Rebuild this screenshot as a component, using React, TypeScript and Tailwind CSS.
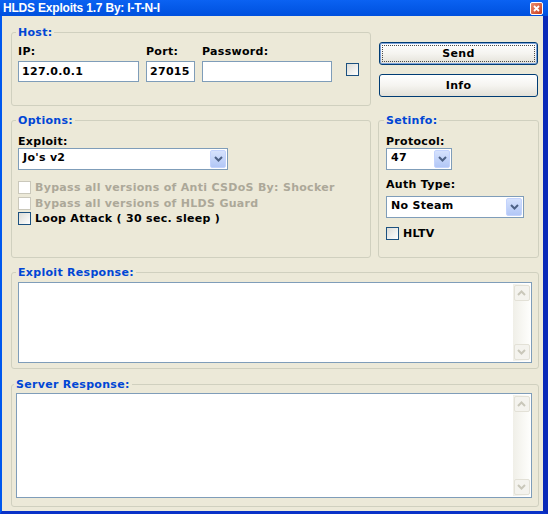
import React from 'react';

function GroupBox({ title, className = '', children }: { title: string; className?: string; children?: React.ReactNode }) {
  return (
    <fieldset className={`rounded-[3px] border border-[#D0D0BF] ${className}`}>
      <legend className="-ml-[2px] px-[2px] leading-[13px] text-[#0046D5]">{title}</legend>
      {children}
    </fieldset>
  );
}

function TextBox({ value = '', className = '' }: { value?: string; className?: string }) {
  return (
    <div className={`flex h-[21px] items-center border border-[#7F9DB9] bg-white pl-[3px] text-black ${className}`}>
      {value}
    </div>
  );
}

function Chevron({ color, up = false }: { color: string; up?: boolean }) {
  return (
    <svg width="9" height="6" viewBox="0 0 9 6">
      <path d={up ? 'M1 5l3.5-3.5L8 5' : 'M1 1l3.5 3.5L8 1'} stroke={color} strokeWidth="2" fill="none" />
    </svg>
  );
}

function Select({ value, className = '' }: { value: string; className?: string }) {
  return (
    <div className={`flex h-[22px] border border-[#7F9DB9] bg-white p-[1px] ${className}`}>
      <span className="flex-1 pl-[3px] pt-[1px] leading-[14px] text-black">{value}</span>
      <span className="flex w-[16px] items-center justify-center rounded-[2px] border border-[#C3D3FD] bg-linear-to-b from-[#D6E2FD] to-[#B2C7F6]">
        <Chevron color="#4D6185" />
      </span>
    </div>
  );
}

function CheckBox({ label, disabled = false, className = '' }: { label?: string; disabled?: boolean; className?: string }) {
  return (
    <div className={`flex items-center ${className}`}>
      <span
        className={`h-[13px] w-[13px] shrink-0 border ${
          disabled ? 'border-[#CAC8BB] bg-white' : 'border-[#1C5180] bg-linear-to-br from-[#DCDCD7] to-white'
        }`}
      />
      {label && <span className={`ml-[4px] ${disabled ? 'text-[#ACA899]' : 'text-black'}`}>{label}</span>}
    </div>
  );
}

function Button({ children, focused = false }: { children: React.ReactNode; focused?: boolean }) {
  return (
    <div
      className={`relative flex h-[23px] items-center justify-center rounded-[3px] border border-[#003C74] bg-linear-to-b from-white via-[#F5F4F0] to-[#E3E1D8] pt-[1px] text-black ${
        focused ? 'shadow-[inset_0_0_0_1px_#7FA3D9]' : ''
      }`}
    >
      {focused && <div className="absolute inset-[2px] border border-dotted border-[#4b4b4b]" />}
      {children}
    </div>
  );
}

function ScrollButton({ up = false }: { up?: boolean }) {
  return (
    <div className="flex h-[16px] w-[16px] items-center justify-center rounded-[2px] border border-[#E3E1D7] bg-[#F4F3EE]">
      <Chevron color="#C9C7BA" up={up} />
    </div>
  );
}

function Memo({ className = '' }: { className?: string }) {
  return (
    <div className={`flex justify-end border border-[#7F9DB9] bg-white p-[1px] ${className}`}>
      <div className="flex w-[17px] flex-col items-center justify-between bg-linear-to-r from-[#F0EFE8] to-[#FEFEFC] py-[1px]">
        <ScrollButton up />
        <ScrollButton />
      </div>
    </div>
  );
}

function TitleBar() {
  return (
    <div className="flex h-[16px] items-center justify-between bg-linear-to-b from-[#0B62F2] to-[#0050DE] pl-[3px] pr-[5px]">
      <span className="font-['Liberation_Sans',Arial,sans-serif] text-[12px] tracking-[-0.2px] text-white">
        HLDS Exploits 1.7 By: I-T-N-I
      </span>
      <div className="flex h-[13px] w-[13px] items-center justify-center rounded-[2px] border border-white bg-linear-to-br from-[#E98B6B] to-[#C9381A]">
        <svg width="7" height="7" viewBox="0 0 7 7">
          <path d="M1 1l5 5M6 1L1 6" stroke="white" strokeWidth="1.8" />
        </svg>
      </div>
    </div>
  );
}

export default function App() {
  return (
    <div className="h-[514px] w-[548px] overflow-hidden bg-[#0831D9] font-['DejaVu_Sans',Verdana,sans-serif] text-[11px] font-bold tracking-[0.3px]">
      <TitleBar />
      <div className="border-b-[3px] border-l-[2px] border-r-[5px] border-b-[#0A32C8] border-l-[#0058EE] border-r-[#0A2AB8]">
        <div className="flex h-[495px] flex-col bg-[#ECE9D8] pl-[9px] pr-[4px] pt-[10px]">
          <div className="flex">
            <GroupBox title="Host:" className="h-[80px] w-[360px] px-[6px] pt-[6px]">
              <div className="flex items-end leading-[13px] text-black">
                <div className="flex flex-col">
                  <span>IP:</span>
                  <TextBox value="127.0.0.1" className="mt-[3px] w-[121px]" />
                </div>
                <div className="ml-[7px] flex flex-col">
                  <span>Port:</span>
                  <TextBox value="27015" className="mt-[3px] w-[49px]" />
                </div>
                <div className="ml-[7px] flex flex-col">
                  <span>Password:</span>
                  <TextBox className="mt-[3px] w-[130px]" />
                </div>
                <CheckBox className="mb-[6px] ml-[14px]" />
              </div>
            </GroupBox>
            <div className="ml-[8px] flex w-[159px] flex-col gap-[9px] pt-[16px]">
              <Button focused>Send</Button>
              <Button>Info</Button>
            </div>
          </div>

          <div className="mt-[8px] flex">
            <GroupBox title="Options:" className="h-[144px] w-[360px] px-[6px] pt-[8px]">
              <div className="flex flex-col leading-[13px]">
                <span className="text-black">Exploit:</span>
                <Select value="Jo's v2" className="w-[210px]" />
                <CheckBox disabled label="Bypass all versions of Anti CSDoS By: Shocker" className="mt-[10px] h-[15px]" />
                <CheckBox disabled label="Bypass all versions of HLDS Guard" className="h-[17px]" />
                <CheckBox label="Loop Attack ( 30 sec. sleep )" className="h-[13px]" />
              </div>
            </GroupBox>
            <GroupBox title="Setinfo:" className="ml-[7px] h-[144px] w-[161px] px-[7px] pt-[8px]">
              <div className="flex flex-col leading-[13px]">
                <span className="text-black">Protocol:</span>
                <Select value="47" className="w-[66px]" />
                <span className="mt-[8px] text-black">Auth Type:</span>
                <Select value="No Steam" className="mt-[5px] w-[138px]" />
                <CheckBox label="HLTV" className="mt-[9px]" />
              </div>
            </GroupBox>
          </div>

          <GroupBox title="Exploit Response:" className="mt-[8px] h-[103px] w-[528px] px-[6px] pt-[3px]">
            <Memo className="h-[81px] w-[514px]" />
          </GroupBox>

          <GroupBox title="Server Response:" className="mt-[9px] h-[129px] w-[528px] px-[4px] pt-[2px]">
            <Memo className="h-[105px] w-[516px]" />
          </GroupBox>
        </div>
      </div>
    </div>
  );
}
